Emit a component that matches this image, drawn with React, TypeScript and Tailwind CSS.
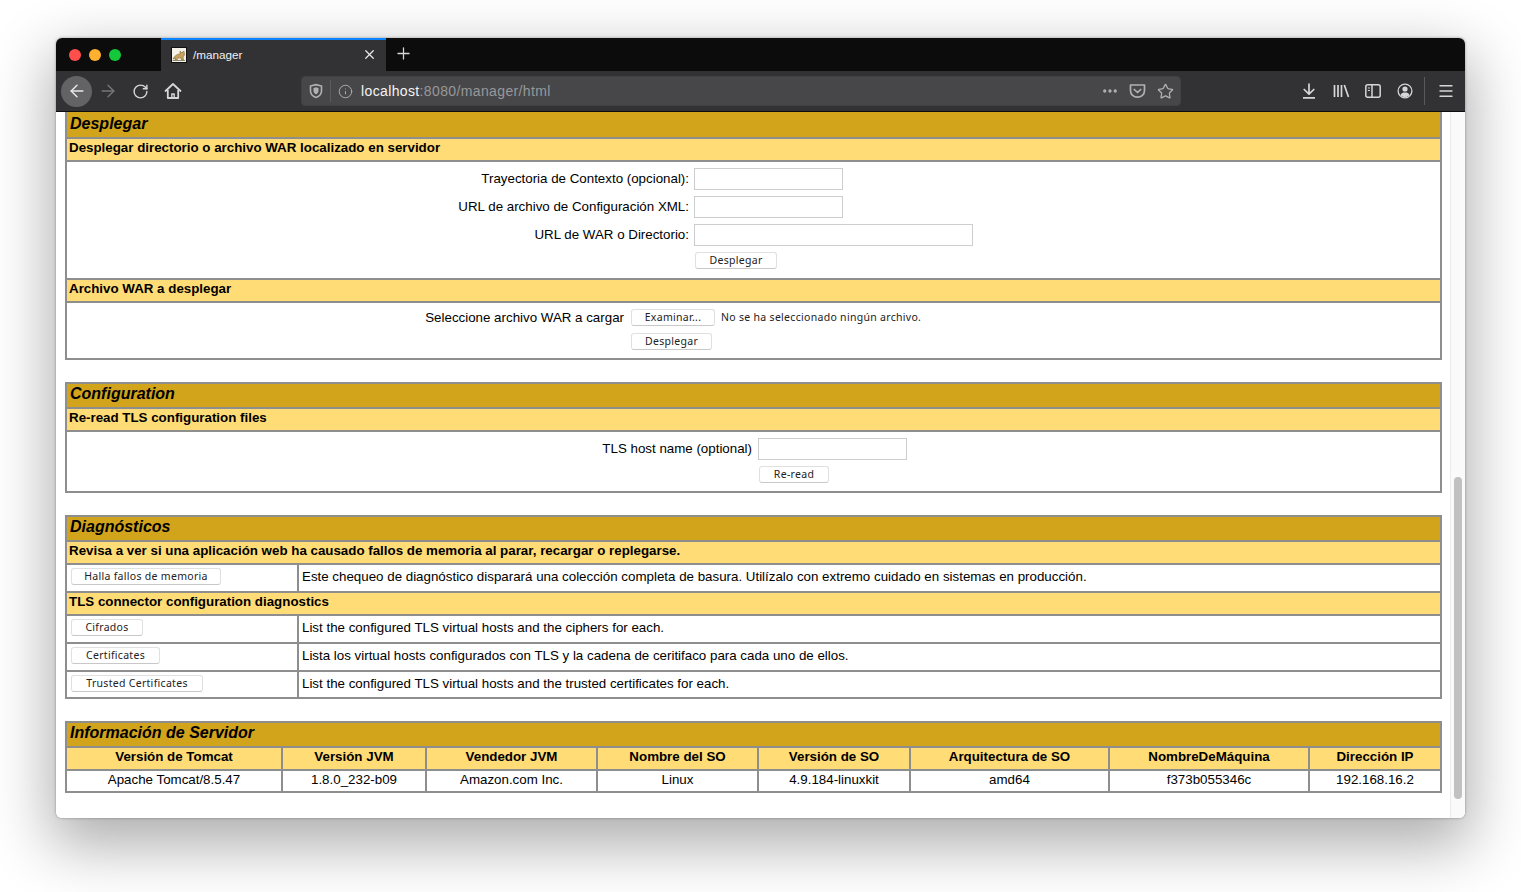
import type { ReactNode } from "react";
import { ArrowLeft, ArrowRight, RotateCw, Info, X, Plus, Star, Menu, Ellipsis } from "lucide-react";

const font = "font-['Liberation_Sans',Arial,sans-serif]";

function Btn({ children, w }: { children: ReactNode; w?: string }) {
  return (
    <button
      className={`flex h-[17px] items-center justify-center rounded-[3px] border border-[#e0e0e0] border-b-[#c8c8c8] bg-white font-['Noto_Sans',sans-serif] text-[10.5px] leading-none tracking-[0.3px] text-[#222] ${w ?? ""}`}
    >
      {children}
    </button>
  );
}

function Field({ w }: { w: string }) {
  return <input className={`h-[22px] border border-[#cdcdcd] bg-white ${w}`} />;
}

function Section({ children, className }: { children: ReactNode; className?: string }) {
  return <section className={`w-[1377px] border-2 border-[#8e8e8e] ${className ?? ""}`}>{children}</section>;
}

function Title({ children, first }: { children: ReactNode; first?: boolean }) {
  return (
    <div className={`flex items-center bg-[#d2a41c] pl-[3px] text-[16px] font-bold italic text-black ${first ? "h-[25px] pb-[1px]" : "h-[23px] pb-[3px]"}`}>
      {children}
    </div>
  );
}

function Sub({ children }: { children: ReactNode }) {
  return (
    <div className="flex h-[23px] items-center border-t-2 border-[#8e8e8e] bg-[#ffdc75] pb-[4px] pl-[2px] text-[13.33px] font-bold text-black">
      {children}
    </div>
  );
}

function DiagRow({ label, w, children, last }: { label: string; w: string; children: ReactNode; last?: boolean }) {
  return (
    <div className={`flex border-t-2 border-[#8e8e8e] bg-white ${last ? "h-[27px]" : "h-[28px]"}`}>
      <div className={`flex w-[230px] items-center pl-[4px] ${last ? "pb-[3px]" : "pb-[3px]"}`}>
        <Btn w={w}>{label}</Btn>
      </div>
      <div className={`flex flex-1 items-center border-l-2 border-[#8e8e8e] pl-[3px] text-[13.33px] leading-none ${last ? "pb-[1px]" : "pb-[3px]"}`}>
        {children}
      </div>
    </div>
  );
}

const infoCols = "grid grid-cols-[214px_144px_171px_161px_152px_199px_200px_132px] text-[13.33px] leading-none";
const headers = ["Versión de Tomcat", "Versión JVM", "Vendedor JVM", "Nombre del SO", "Versión de SO", "Arquitectura de SO", "NombreDeMáquina", "Dirección IP"];
const values = ["Apache Tomcat/8.5.47", "1.8.0_232-b09", "Amazon.com Inc.", "Linux", "4.9.184-linuxkit", "amd64", "f373b055346c", "192.168.16.2"];

function TomcatIcon() {
  return (
    <svg width="16" height="16" viewBox="0 0 16 16">
      <rect x="0.5" y="0.5" width="15" height="15" fill="#f4f1e6" stroke="#111" />
      <path d="M2 12 C4 8 7 7 9 7 L9 4 L10.5 5.5 L12 5 L13 4 L13.5 8 L12 10 L12.5 13 L10.5 13 L10 11 L7 11 L6 13 L4 13 L4.5 11 Z" fill="#c9a25e" stroke="#6b5a32" strokeWidth="0.5" />
      <path d="M1.5 13.5 L14 13.5" stroke="#8a8a6a" />
    </svg>
  );
}

function ShieldIcon() {
  return (
    <svg width="16" height="16" viewBox="0 0 16 16" fill="none" stroke="#b1b1b3" strokeWidth="1.6">
      <path d="M2.5 3 L8 1.6 L13.5 3 V8 C13.5 11 11 13.4 8 14.4 C5 13.4 2.5 11 2.5 8 Z" />
      <path d="M5.5 5 L8 4.3 L10.5 5 V8 C10.5 9.6 9.4 10.8 8 11.4 C6.6 10.8 5.5 9.6 5.5 8 Z" fill="#b1b1b3" stroke="none" />
    </svg>
  );
}

function HomeIcon() {
  return (
    <svg width="18" height="18" viewBox="0 0 18 18" fill="none" stroke="#d6d6d8" strokeWidth="1.8" strokeLinejoin="round">
      <path d="M1.5 9 L9 2 L16.5 9" strokeLinecap="round" />
      <path d="M3.8 8 V16 H14.2 V8" />
      <path d="M7.8 16 V12 H10.2 V16" strokeWidth="1.4" />
    </svg>
  );
}

function PocketIcon() {
  return (
    <svg width="17" height="16" viewBox="0 0 17 16" fill="none" stroke="#b1b1b3" strokeWidth="1.7" strokeLinecap="round" strokeLinejoin="round">
      <path d="M1.5 2 H15.5 V7.5 C15.5 11.5 12.3 14.2 8.5 14.2 C4.7 14.2 1.5 11.5 1.5 7.5 Z" />
      <path d="M5.3 6.5 L8.5 9.5 L11.7 6.5" />
    </svg>
  );
}

function DownloadIcon() {
  return (
    <svg width="16" height="16" viewBox="0 0 16 16" fill="none" stroke="#d6d6d8" strokeWidth="1.7">
      <path d="M8 1 V11 M3.2 6.5 L8 11.2 L12.8 6.5" strokeLinecap="round" strokeLinejoin="round" />
      <path d="M2 14.8 H14" />
    </svg>
  );
}

function LibraryIcon() {
  return (
    <svg width="17" height="14" viewBox="0 0 17 14" fill="none" stroke="#d6d6d8" strokeWidth="1.7">
      <path d="M1.5 1 V13 M5 1 V13 M8.5 1 V13 M11.3 1 L15.5 13" />
    </svg>
  );
}

function SidebarIcon() {
  return (
    <svg width="16" height="14" viewBox="0 0 16 14" fill="none" stroke="#d6d6d8" strokeWidth="1.5">
      <rect x="0.8" y="0.8" width="14.4" height="12.4" rx="2" />
      <path d="M7 1 V13" />
      <path d="M2.8 4 H5 M2.8 6.5 H5" strokeWidth="1.2" />
    </svg>
  );
}

function AccountIcon() {
  return (
    <svg width="16" height="16" viewBox="0 0 16 16" fill="none" stroke="#d6d6d8" strokeWidth="1.3">
      <circle cx="8" cy="8" r="6.9" />
      <circle cx="8" cy="6" r="2.6" fill="#d6d6d8" stroke="none" />
      <path d="M3.4 12 C4.4 9.8 6 9.4 8 9.4 C10 9.4 11.6 9.8 12.6 12 C11.4 13.4 9.8 14 8 14 C6.2 14 4.6 13.4 3.4 12 Z" fill="#d6d6d8" stroke="none" />
    </svg>
  );
}

function ToolBox({ children, w }: { children: ReactNode; w?: string }) {
  return <div className={`flex h-[32px] items-center justify-center ${w ?? "w-[32px]"}`}>{children}</div>;
}

export default function App() {
  return (
    <div className={`min-h-[892px] bg-white pl-[56px] pt-[38px] ${font}`}>
      <div className="flex h-[780px] w-[1409px] flex-col overflow-hidden rounded-[6px] shadow-[0_22px_60px_6px_rgba(0,0,0,0.32),0_0_3px_rgba(0,0,0,0.35)]">
        {/* barra de pestañas */}
        <div className="flex h-[33px] shrink-0 items-stretch bg-[#0c0c0d]">
          <div className="flex w-[105px] items-center gap-[8px] pl-[13px]">
            <span className="size-[12px] rounded-full bg-[#ff4f4d]" />
            <span className="size-[12px] rounded-full bg-[#ffb02e]" />
            <span className="size-[12px] rounded-full bg-[#14c83c]" />
          </div>
          <div className="flex w-[225px] items-center border-t-2 border-[#0a84ff] bg-[#323234] pb-[2px] pl-[10px] pr-[9px]">
            <TomcatIcon />
            <span className="ml-[6px] flex-1 text-[11.7px] text-[#f0f0f2]">/manager</span>
            <X size={15} strokeWidth={2} className="text-[#e8e8ea]" />
          </div>
          <div className="flex w-[34px] items-center justify-center pb-[2px]">
            <Plus size={19} strokeWidth={1.6} className="text-[#d6d6d8]" />
          </div>
        </div>

        {/* barra de herramientas */}
        <div className="flex h-[41px] shrink-0 items-center border-b border-[#0c0c0d] bg-[#323234] pl-[5px]">
          <div className="flex size-[31px] items-center justify-center rounded-full bg-[#636365]">
            <ArrowLeft size={20} strokeWidth={1.7} className="text-[#e8e8ea]" />
          </div>
          <ToolBox><ArrowRight size={20} strokeWidth={1.6} className="text-[#77777a]" /></ToolBox>
          <ToolBox><RotateCw size={17} strokeWidth={2} className="text-[#d6d6d8]" /></ToolBox>
          <ToolBox w="w-[34px]"><HomeIcon /></ToolBox>
          <div className="ml-[111px] flex h-[30px] w-[880px] items-center rounded-[4px] border border-[#414143] bg-[#474749] text-[14px]">
            <div className="flex w-[29px] items-center justify-center border-r border-[#5c5c5e] py-[3px]">
              <ShieldIcon />
            </div>
            <Info size={15} strokeWidth={1.5} className="ml-[7px] text-[#b1b1b3]" />
            <span className="ml-[8px] flex-1 tracking-[0.37px] text-[#f4f4f6]">
              localhost<span className="text-[#98989a]">:8080/manager/html</span>
            </span>
            <Ellipsis size={18} strokeWidth={2.4} className="mr-[10px] text-[#b1b1b3]" />
            <PocketIcon />
            <Star size={17} strokeWidth={1.8} className="ml-[11px] mr-[6px] text-[#b1b1b3]" />
          </div>
          <div className="flex-1" />
          <ToolBox><DownloadIcon /></ToolBox>
          <ToolBox><LibraryIcon /></ToolBox>
          <ToolBox><SidebarIcon /></ToolBox>
          <ToolBox><AccountIcon /></ToolBox>
          <div className="ml-[3px] h-[28px] w-px bg-[#5a5a5c]" />
          <ToolBox w="w-[40px] pl-[2px]"><Menu size={18} strokeWidth={1.8} className="text-[#d6d6d8]" /></ToolBox>
        </div>

        {/* página */}
        <div className="flex min-h-0 flex-1 bg-white">
          <main className="flex-1 pl-[9px] text-black">
            <section className="w-[1377px] border-x-2 border-b-2 border-[#8e8e8e]">
              <Title first>Desplegar</Title>
              <Sub>Desplegar directorio o archivo WAR localizado en servidor</Sub>
              <div className="h-[118px] border-t-2 border-[#8e8e8e] pt-[6px] text-[13.33px]">
                <div className="grid grid-cols-[622px_1fr] items-center gap-x-[5px] gap-y-[6px]">
                  <label className="text-right">Trayectoria de Contexto (opcional):</label>
                  <Field w="w-[149px]" />
                  <label className="text-right">URL de archivo de Configuración XML:</label>
                  <Field w="w-[149px]" />
                  <label className="text-right">URL de WAR o Directorio:</label>
                  <Field w="w-[279px]" />
                  <span />
                  <Btn w="w-[82px] ml-[1px]">Desplegar</Btn>
                </div>
              </div>
              <Sub>Archivo WAR a desplegar</Sub>
              <div className="h-[57px] border-t-2 border-[#8e8e8e] pt-[6px] text-[13.33px] leading-none">
                <div className="grid grid-cols-[557px_1fr] items-center gap-x-[7px] gap-y-[7px]">
                  <label className="text-right">Seleccione archivo WAR a cargar</label>
                  <div className="flex items-center">
                    <Btn w="w-[84px]">Examinar...</Btn>
                    <span className="ml-[6px] font-['Noto_Sans',sans-serif] text-[10.5px] tracking-[0.3px] text-[#222]">
                      No se ha seleccionado ningún archivo.
                    </span>
                  </div>
                  <span />
                  <Btn w="w-[81px]">Desplegar</Btn>
                </div>
              </div>
            </section>

            <Section className="mt-[22px]">
              <Title>Configuration</Title>
              <Sub>Re-read TLS configuration files</Sub>
              <div className="h-[61px] border-t-2 border-[#8e8e8e] pt-[6px] text-[13.33px]">
                <div className="grid grid-cols-[685px_1fr] items-center gap-x-[6px] gap-y-[6px]">
                  <label className="text-right">TLS host name (optional)</label>
                  <Field w="w-[149px]" />
                  <span />
                  <Btn w="w-[70px] ml-[1px]">Re-read</Btn>
                </div>
              </div>
            </Section>

            <Section className="mt-[22px]">
              <Title>Diagnósticos</Title>
              <Sub>Revisa a ver si una aplicación web ha causado fallos de memoria al parar, recargar o replegarse.</Sub>
              <DiagRow label="Halla fallos de memoria" w="w-[150px]">
                Este chequeo de diagnóstico disparará una colección completa de basura. Utilízalo con extremo cuidado en sistemas en producción.
              </DiagRow>
              <Sub>TLS connector configuration diagnostics</Sub>
              <DiagRow label="Cifrados" w="w-[72px]">List the configured TLS virtual hosts and the ciphers for each.</DiagRow>
              <DiagRow label="Certificates" w="w-[89px]">Lista los virtual hosts configurados con TLS y la cadena de ceritifaco para cada uno de ellos.</DiagRow>
              <DiagRow label="Trusted Certificates" w="w-[132px]" last>List the configured TLS virtual hosts and the trusted certificates for each.</DiagRow>
            </Section>

            <Section className="mt-[22px]">
              <Title>Información de Servidor</Title>
              <div className={`${infoCols} h-[23px] border-t-2 border-[#8e8e8e] bg-[#ffdc75] font-bold`}>
                {headers.map((h, i) => (
                  <div key={h} className={`flex items-center justify-center pb-[4px] ${i > 0 ? "border-l-2 border-[#8e8e8e]" : ""}`}>{h}</div>
                ))}
              </div>
              <div className={`${infoCols} h-[22px] border-t-2 border-[#8e8e8e]`}>
                {values.map((v, i) => (
                  <div key={v} className={`flex items-center justify-center pb-[3px] ${i > 0 ? "border-l-2 border-[#8e8e8e]" : ""}`}>{v}</div>
                ))}
              </div>
            </Section>
          </main>

          {/* barra de desplazamiento */}
          <div className="w-[15px] shrink-0 border-l border-[#ececec] bg-[#fafafa] pl-[3px] pt-[365px]">
            <div className="h-[322px] w-[8px] rounded-full bg-[#c1c1c1]" />
          </div>
        </div>
      </div>
    </div>
  );
}
